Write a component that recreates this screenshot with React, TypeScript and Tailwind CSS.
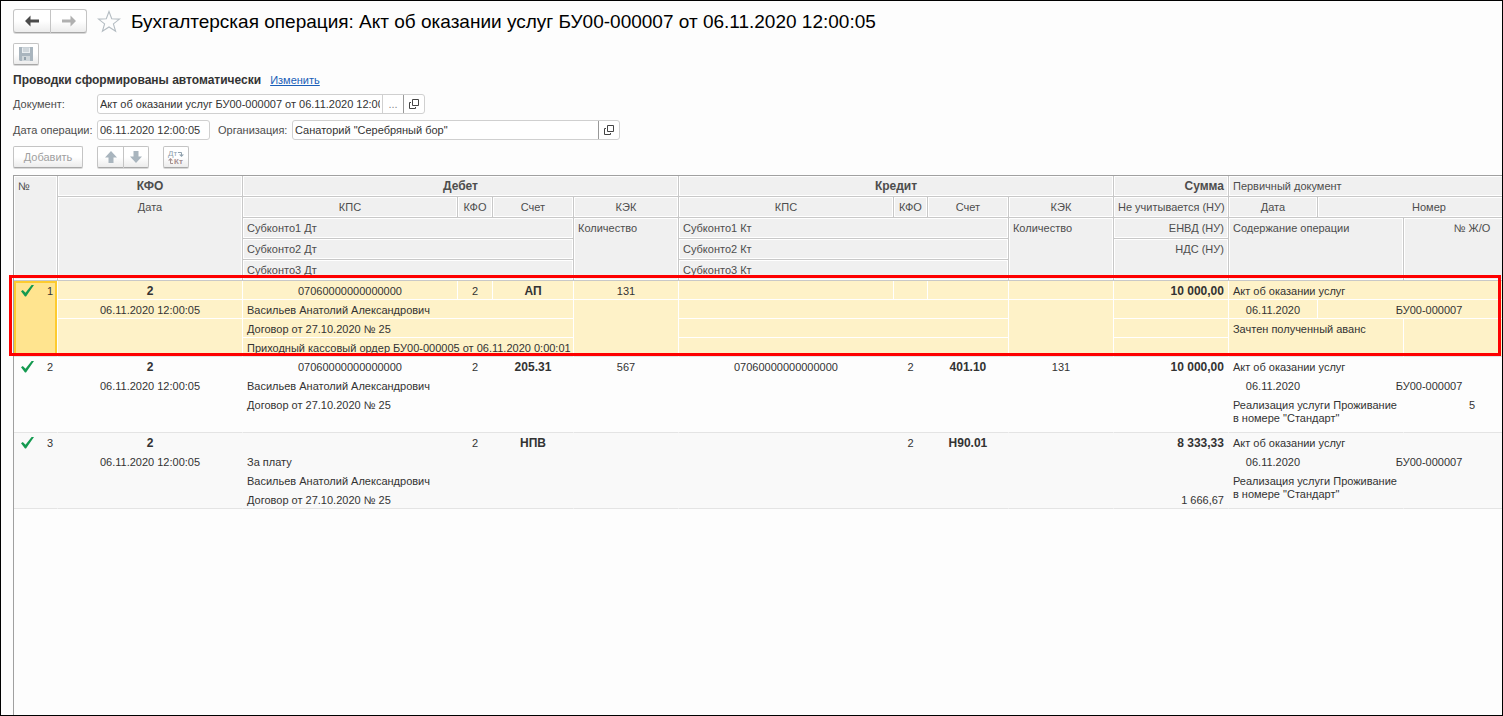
import { useState } from "react";
import clsx from "clsx";

type Side = {
    kps: string;
    kfo: string;
    account: string;
    kek: string;
    subconto: string[];
}

type Entry = {
    id: number;
    kfo: string;
    date: string;
    debit: Side;
    credit: Side;
    sums: string[];
    docName: string;
    docDate: string;
    docNumber: string;
    content: string;
    journal: string;
}

const entries: Entry[] = [
    {
        id: 1,
        kfo: '2',
        date: '06.11.2020 12:00:05',
        debit: {
            kps: '07060000000000000', kfo: '2', account: 'АП', kek: '131',
            subconto: ['Васильев Анатолий Александрович', 'Договор от 27.10.2020 № 25', 'Приходный кассовый ордер БУ00-000005 от 06.11.2020 0:00:01'],
        },
        credit: { kps: '', kfo: '', account: '', kek: '', subconto: ['', '', ''] },
        sums: ['10 000,00', '', '', ''],
        docName: 'Акт об оказании услуг',
        docDate: '06.11.2020',
        docNumber: 'БУ00-000007',
        content: 'Зачтен полученный аванс',
        journal: '',
    },
    {
        id: 2,
        kfo: '2',
        date: '06.11.2020 12:00:05',
        debit: {
            kps: '07060000000000000', kfo: '2', account: '205.31', kek: '567',
            subconto: ['Васильев Анатолий Александрович', 'Договор от 27.10.2020 № 25', ''],
        },
        credit: { kps: '07060000000000000', kfo: '2', account: '401.10', kek: '131', subconto: ['', '', ''] },
        sums: ['10 000,00', '', '', ''],
        docName: 'Акт об оказании услуг',
        docDate: '06.11.2020',
        docNumber: 'БУ00-000007',
        content: 'Реализация услуги Проживание в номере "Стандарт"',
        journal: '5',
    },
    {
        id: 3,
        kfo: '2',
        date: '06.11.2020 12:00:05',
        debit: {
            kps: '', kfo: '2', account: 'НПВ', kek: '',
            subconto: ['За плату', 'Васильев Анатолий Александрович', 'Договор от 27.10.2020 № 25'],
        },
        credit: { kps: '', kfo: '2', account: 'Н90.01', kek: '', subconto: ['', '', ''] },
        sums: ['8 333,33', '', '', '1 666,67'],
        docName: 'Акт об оказании услуг',
        docDate: '06.11.2020',
        docNumber: 'БУ00-000007',
        content: 'Реализация услуги Проживание в номере "Стандарт"',
        journal: '',
    },
]

const buttonStyle = "flex items-center justify-center border border-[#c4c4c4] border-b-[#a8a8a8] bg-linear-to-b from-white from-50% to-[#ececec] shadow-[0_1px_0_#d8d8d8]"
const fieldStyle = "flex h-5 overflow-hidden rounded-[3px] border border-[#d0d0d0] bg-white"
const inputStyle = "min-w-0 flex-1 px-[2px] text-[#333] outline-none"

const BackIcon = () => (
    <svg width="14" height="12" viewBox="0 0 14 12" fill="currentColor">
        <path d="M0 6 5.5 0.5V4.5H14V7.5H5.5V11.5Z" />
    </svg>
)

const StarIcon = () => (
    <svg width="24" height="23" viewBox="0 0 24 23" fill="none" stroke="#b4bcc2" strokeWidth="1.1">
        <path d="M12 1.5 14.7 8.8 22.5 9.1 16.4 13.9 18.6 21.3 12 17 5.4 21.3 7.6 13.9 1.5 9.1 9.3 8.8Z" />
    </svg>
)

const SaveIcon = () => (
    <svg width="14" height="14" viewBox="0 0 14 14">
        <path d="M0 0H14V14H1L0 13Z" fill="#a9b5be" />
        <path d="M3 0.5H11V6H3Z" fill="#e9edf0" />
        <path d="M4 2H10M4 4H10" stroke="#b5bfc6" />
        <path d="M3 9H11V14H3Z" fill="#cfd6da" />
        <path d="M5 10H7V13H5Z" fill="#93a1ab" />
    </svg>
)

const OpenIcon = () => (
    <svg width="10" height="10" viewBox="0 0 10 10" fill="none" stroke="#444">
        <path d="M3.5 0.5H9.5V6.5H3.5ZM2 3.5H0.5V9.5H6.5V8" />
    </svg>
)

const ArrowUpIcon = ({ className }: { className?: string }) => (
    <svg width="12" height="12" viewBox="0 0 12 12" fill="#a9b5be" className={className}>
        <path d="M6 0 12 6.5H8.5V12H3.5V6.5H0Z" />
    </svg>
)

const SwapIcon = () => (
    <svg width="18" height="16" viewBox="0 0 18 16" fontFamily="Liberation Sans, sans-serif" fontSize="8">
        <text x="1" y="7" fill="#8fa0ac">Дт</text>
        <text x="7" y="15" fill="#a58f8f" fontWeight="bold">Кт</text>
        <path d="M11 3.5H14.5V6" fill="none" stroke="#8fa0ac" />
        <path d="M12 5.5H17L14.5 8Z" fill="#8fa0ac" />
        <path d="M6 14.5H3.5V11" fill="none" stroke="#a58f8f" />
        <path d="M1 11.5H6L3.5 9Z" fill="#a58f8f" />
    </svg>
)

const CheckIcon = () => (
    <svg width="13" height="12" viewBox="0 0 13 12" fill="#149a50">
        <path d="M0 6.2 1.8 5 4.5 7.8 10.6 0H13L5 11.5H4Z" />
    </svg>
)

const Head = ({ children, className, ...span }: React.ComponentProps<'th'>) => (
    <th {...span} className={clsx("border-r border-b border-[#c8c8c8] bg-[#f0f0f0] px-1 pt-1 align-top whitespace-nowrap shadow-[inset_0_0_0_1px_#fff]", className)}>
        {children}
    </th>
)

const Cell = ({ selected, last, children, className, ...span }: React.ComponentProps<'td'> & { selected: boolean, last?: boolean }) => (
    <td
        {...span}
        className={clsx(
            "border-r border-b px-1 pt-1 align-top",
            selected ? "border-white" : "border-transparent",
            last && "border-b-[#e4e4e4]",
            className
        )}
    >
        {children}
    </td>
)

const SideTop = ({ side, selected }: { side: Side, selected: boolean }) => (
    <>
        <Cell selected={selected} className="text-center">{side.kps}</Cell>
        <Cell selected={selected} className="text-center">{side.kfo}</Cell>
        <Cell selected={selected} className="text-center text-xs leading-[13px] font-bold">{side.account}</Cell>
        <Cell selected={selected} className="text-center">{side.kek}</Cell>
    </>
)

const EntryRows = ({ entry, selected, onSelect }: { entry: Entry, selected: boolean, onSelect: () => void }) => {
    const { debit, credit } = entry
    return (
        <tbody
            onClick={onSelect}
            className={clsx("text-[#333]", selected ? "bg-[#fef2c8]" : "even:bg-[#fdfdfd] odd:bg-[#f9f9f9]")}
        >
            <tr className="h-[19px]">
                <Cell selected={selected} last rowSpan={4} className={clsx(selected && "bg-[#ffe48f] shadow-[inset_0_0_0_2px_#fdcb2f]")}>
                    <div className="flex items-start justify-between pl-[3px]">
                        <CheckIcon />
                        <span>{entry.id}</span>
                    </div>
                </Cell>
                <Cell selected={selected} className="text-center text-xs leading-[13px] font-bold">{entry.kfo}</Cell>
                <SideTop side={debit} selected={selected} />
                <SideTop side={credit} selected={selected} />
                <Cell selected={selected} className="text-right text-xs leading-[13px] font-bold">{entry.sums[0]}</Cell>
                <Cell selected={selected} colSpan={3}>{entry.docName}</Cell>
            </tr>
            <tr className="h-[19px]">
                <Cell selected={selected} className="text-center">{entry.date}</Cell>
                <Cell selected={selected} colSpan={3} className="whitespace-nowrap">{debit.subconto[0]}</Cell>
                <Cell selected={selected} last rowSpan={3} />
                <Cell selected={selected} colSpan={3} className="whitespace-nowrap">{credit.subconto[0]}</Cell>
                <Cell selected={selected} last rowSpan={3} />
                <Cell selected={selected} className="text-right">{entry.sums[1]}</Cell>
                <Cell selected={selected} className="text-center">{entry.docDate}</Cell>
                <Cell selected={selected} colSpan={2} className="text-center">{entry.docNumber}</Cell>
            </tr>
            <tr className="h-[19px]">
                <Cell selected={selected} last rowSpan={2} />
                <Cell selected={selected} colSpan={3} className="whitespace-nowrap">{debit.subconto[1]}</Cell>
                <Cell selected={selected} colSpan={3} className="whitespace-nowrap">{credit.subconto[1]}</Cell>
                <Cell selected={selected} className="text-right">{entry.sums[2]}</Cell>
                <Cell selected={selected} last colSpan={2} rowSpan={2}>{entry.content}</Cell>
                <Cell selected={selected} last rowSpan={2} className="text-center">{entry.journal}</Cell>
            </tr>
            <tr className="h-[19px]">
                <Cell selected={selected} last colSpan={3} className="whitespace-nowrap">{debit.subconto[2]}</Cell>
                <Cell selected={selected} last colSpan={3} className="whitespace-nowrap">{credit.subconto[2]}</Cell>
                <Cell selected={selected} last className="text-right">{entry.sums[3]}</Cell>
            </tr>
        </tbody>
    )
}

export default function App() {
    const [selected, setSelected] = useState(1)

    return (
        <div className="flex min-h-screen flex-col overflow-hidden border border-black bg-[#fdfdfd] pt-2 pl-3 font-['Liberation_Sans',Arial,sans-serif] text-[11px] leading-[13px] text-[#4d4d4d]">
            <header className="flex h-6 items-center">
                <div className="flex">
                    <button aria-label="Назад" className={clsx(buttonStyle, "h-6 w-[38px] rounded-l-[3px] text-[#4a4a4a]")}>
                        <BackIcon />
                    </button>
                    <button aria-label="Вперед" className={clsx(buttonStyle, "h-6 w-9 rounded-r-[3px] border-l-0 text-[#b0b0b0]")}>
                        <span className="rotate-180"><BackIcon /></span>
                    </button>
                </div>
                <button aria-label="В избранное" className="ml-[10px]">
                    <StarIcon />
                </button>
                <h1 className="ml-[10px] pt-px text-[19px] leading-6 whitespace-nowrap text-black">
                    Бухгалтерская операция: Акт об оказании услуг БУ00-000007 от 06.11.2020 12:00:05
                </h1>
            </header>

            <button aria-label="Записать" className={clsx(buttonStyle, "mt-[10px] h-[22px] w-[26px] rounded-[2px]")}>
                <SaveIcon />
            </button>

            <div className="mt-[7px] flex h-4 items-center gap-[9px]">
                <p className="text-xs font-bold text-[#333]">Проводки сформированы автоматически</p>
                <a href="#edit" className="text-[#1a5fb8] underline">Изменить</a>
            </div>

            <div className="mt-[6px] flex items-center">
                <label htmlFor="document" className="w-[84px]">Документ:</label>
                <div className={clsx(fieldStyle, "w-[328px]")}>
                    <input id="document" className={inputStyle} defaultValue="Акт об оказании услуг БУ00-000007 от 06.11.2020 12:00:05" />
                    <button aria-label="Выбрать" className="w-[21px] border-l border-[#d0d0d0] text-[#888]">...</button>
                    <button aria-label="Открыть документ" className="flex w-[21px] items-center justify-center border-l border-[#999]">
                        <OpenIcon />
                    </button>
                </div>
            </div>

            <div className="mt-[6px] flex items-center">
                <label htmlFor="date" className="w-[84px] whitespace-nowrap">Дата операции:</label>
                <div className={clsx(fieldStyle, "w-[113px]")}>
                    <input id="date" className={inputStyle} defaultValue="06.11.2020 12:00:05" />
                </div>
                <label htmlFor="organization" className="ml-2 w-[74px]">Организация:</label>
                <div className={clsx(fieldStyle, "w-[328px]")}>
                    <input id="organization" className={inputStyle} defaultValue={'Санаторий "Серебряный бор"'} />
                    <button aria-label="Открыть организацию" className="flex w-[21px] items-center justify-center border-l border-[#999]">
                        <OpenIcon />
                    </button>
                </div>
            </div>

            <div className="mt-[6px] flex gap-[14px]">
                <button className={clsx(buttonStyle, "h-[22px] w-[70px] rounded-[2px] text-[#a0a0a0]")}>Добавить</button>
                <div className="flex">
                    <button aria-label="Вверх" className={clsx(buttonStyle, "h-[22px] w-[27px] rounded-l-[2px]")}>
                        <ArrowUpIcon />
                    </button>
                    <button aria-label="Вниз" className={clsx(buttonStyle, "h-[22px] w-[25px] rounded-r-[2px] border-l-0")}>
                        <ArrowUpIcon className="rotate-180" />
                    </button>
                </div>
                <button aria-label="Поменять дебет и кредит" className={clsx(buttonStyle, "h-[22px] w-[26px] rounded-[2px]")}>
                    <SwapIcon />
                </button>
            </div>

            <main className="relative mt-[7px] flex-1 border-t border-l border-[#a0a0a0]">
                {/* the last column runs past the right edge of the window */}
                <table className="w-[calc(100%+39px)] min-w-[1400px] table-fixed border-separate border-spacing-0 text-left">
                    <colgroup>
                        <col className="w-11" />
                        <col className="w-[185px]" />
                        <col />
                        <col className="w-[35px]" />
                        <col className="w-[81px]" />
                        <col className="w-[105px]" />
                        <col />
                        <col className="w-[34px]" />
                        <col className="w-[81px]" />
                        <col className="w-[105px]" />
                        <col className="w-[115px]" />
                        <col className="w-[89px]" />
                        <col className="w-[86px]" />
                        <col className="w-[137px]" />
                    </colgroup>
                    <thead className="[&_th]:font-normal">
                        <tr className="h-[21px]">
                            <Head rowSpan={5}>№</Head>
                            <Head className="text-center text-xs leading-[13px] font-bold!">КФО</Head>
                            <Head colSpan={4} className="text-center text-xs leading-[13px] font-bold!">Дебет</Head>
                            <Head colSpan={4} className="text-center text-xs leading-[13px] font-bold!">Кредит</Head>
                            <Head className="text-right text-xs leading-[13px] font-bold!">Сумма</Head>
                            <Head colSpan={3}>Первичный документ</Head>
                        </tr>
                        <tr className="h-[21px]">
                            <Head rowSpan={4} className="text-center">Дата</Head>
                            <Head className="text-center">КПС</Head>
                            <Head className="text-center">КФО</Head>
                            <Head className="text-center">Счет</Head>
                            <Head className="text-center">КЭК</Head>
                            <Head className="text-center">КПС</Head>
                            <Head className="text-center">КФО</Head>
                            <Head className="text-center">Счет</Head>
                            <Head className="text-center">КЭК</Head>
                            <Head className="text-right">Не учитывается (НУ)</Head>
                            <Head className="text-center">Дата</Head>
                            <Head colSpan={2} className="text-center">Номер</Head>
                        </tr>
                        <tr className="h-[21px]">
                            <Head colSpan={3}>Субконто1 Дт</Head>
                            <Head rowSpan={3}>Количество</Head>
                            <Head colSpan={3}>Субконто1 Кт</Head>
                            <Head rowSpan={3}>Количество</Head>
                            <Head className="text-right">ЕНВД (НУ)</Head>
                            <Head colSpan={2} rowSpan={3}>Содержание операции</Head>
                            <Head rowSpan={3} className="text-center">№ Ж/О</Head>
                        </tr>
                        <tr className="h-[21px]">
                            <Head colSpan={3}>Субконто2 Дт</Head>
                            <Head colSpan={3}>Субконто2 Кт</Head>
                            <Head rowSpan={2} className="text-right">НДС (НУ)</Head>
                        </tr>
                        <tr className="h-[21px]">
                            <Head colSpan={3}>Субконто3 Дт</Head>
                            <Head colSpan={3}>Субконто3 Кт</Head>
                        </tr>
                    </thead>
                    {entries.map((entry) => (
                        <EntryRows
                            key={entry.id}
                            entry={entry}
                            selected={entry.id === selected}
                            onSelect={() => setSelected(entry.id)}
                        />
                    ))}
                </table>
                {/* callout around the first entry */}
                <div className="pointer-events-none absolute top-[99px] right-px -left-[5px] h-[81px] border-[3px] border-[#fe0000]" />
            </main>
        </div>
    )
}
